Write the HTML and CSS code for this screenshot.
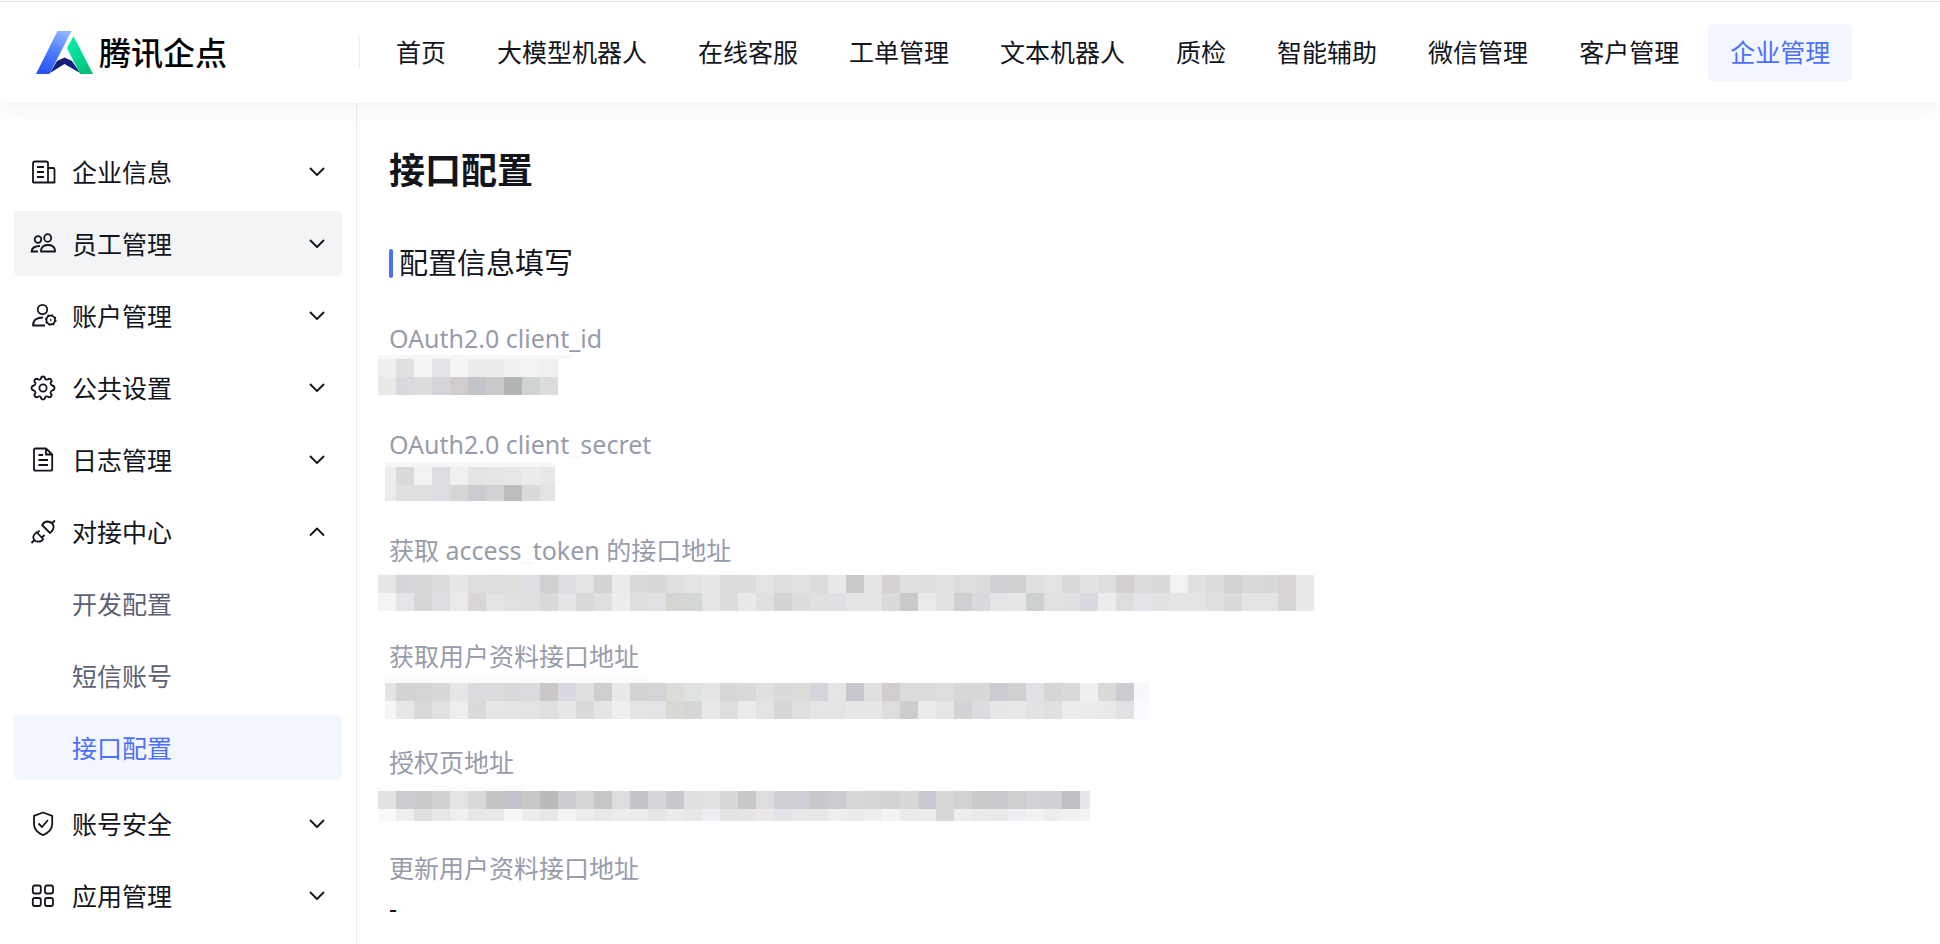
FILE: index.html
```
<!DOCTYPE html>
<html lang="zh-CN">
<head>
<meta charset="utf-8">
<title>接口配置 - 腾讯企点</title>
<link rel="stylesheet" href="styles.css">
</head>
<body>
<header class="topbar">
  <a class="brand" href="#">
    <svg class="brand-mark" viewBox="0 0 57 43" aria-hidden="true">
      <defs>
        <linearGradient id="blue" x1="0.7" y1="0" x2="0.3" y2="1"><stop offset="0" stop-color="#8fb4ff"/><stop offset="0.5" stop-color="#4a7cff"/><stop offset="1" stop-color="#2b52f5"/></linearGradient>
        <linearGradient id="green" x1="0.2" y1="0" x2="0.7" y2="1"><stop offset="0" stop-color="#06f3b4"/><stop offset="1" stop-color="#06bf76"/></linearGradient>
      </defs>
      <path d="M14 42 21 30 28.500 26.500 36 30 44 42 28.500 33z" fill="#122079"/>
      <path d="M21.500 0H35.500L13.500 43H0z" fill="url(#blue)"/>
      <path d="M37.500 5 57 43H44L31 17z" fill="url(#green)"/>
    </svg>
    <span class="brand-name">腾讯企点</span>
  </a>
  <nav class="mainnav">
    <a href="#">首页</a>
    <a href="#">大模型机器人</a>
    <a href="#">在线客服</a>
    <a href="#">工单管理</a>
    <a href="#">文本机器人</a>
    <a href="#">质检</a>
    <a href="#">智能辅助</a>
    <a href="#">微信管理</a>
    <a href="#">客户管理</a>
    <a href="#" class="active">企业管理</a>
  </nav>
</header>
<div class="layout">
  <aside class="sidebar">
    <button type="button" class="item">
      <svg class="icon" viewBox="0 0 28 28"><path d="M4 25V5.500Q4 3.500 6 3.500H17Q19 3.500 19 5.500V24.500M4 24.500H25.500V11.500Q25.500 10 24 10H19M8 9H15M8 14H15M8 19H15"/></svg>
      <span>企业信息</span><svg class="chev" viewBox="0 0 16 10"><path d="M1 1 8 8 15 1"/></svg>
    </button>
    <button type="button" class="item hover">
      <svg class="icon" viewBox="0 0 28 28"><circle cx="9" cy="9.500" r="3.300"/><ellipse cx="18.700" cy="8" rx="3.500" ry="3.800"/><path d="M12 21.500V20Q13 15 19 15T26 20V21.500zM11 16Q3 16 2.500 21.500H9"/></svg>
      <span>员工管理</span><svg class="chev" viewBox="0 0 16 10"><path d="M1 1 8 8 15 1"/></svg>
    </button>
    <button type="button" class="item">
      <svg class="icon" viewBox="0 0 28 28"><circle cx="13.500" cy="7.500" r="4.700"/><path d="M14 15.500Q4 15.500 4 23.500H16"/><circle cx="21.700" cy="18" r="4.300"/><circle cx="21.700" cy="18" r="5.200" stroke-dasharray="2 2.080" stroke-width="1.300"/><circle cx="21.700" cy="18" r=".6" stroke-width="1"/></svg>
      <span>账户管理</span><svg class="chev" viewBox="0 0 16 10"><path d="M1 1 8 8 15 1"/></svg>
    </button>
    <button type="button" class="item">
      <svg class="icon" viewBox="0 0 28 28"><path d="M11.800 5Q12.200 2.500 14 2.500T16.200 5Q17 6 18.500 5.500Q20.500 3.900 22 5.500T21.500 9Q21.500 11 23 11.500Q25.500 11.800 25.500 14T23 16.500Q21.500 17 21.500 19Q23.500 21 22 22.500T18.500 22.500Q17 22 16.200 23Q16 25.500 14 25.500T11.800 23Q11 22 9.500 22.500Q7.500 24 6 22.500T6.500 19Q6.500 17 5 16.500Q2.500 16 2.500 14T5 11.500Q6.500 11 6.500 9Q4.500 7 6 5.500T9.500 5.500Q11 6 11.800 5z"/><circle cx="14" cy="14" r="3.600"/></svg>
      <span>公共设置</span><svg class="chev" viewBox="0 0 16 10"><path d="M1 1 8 8 15 1"/></svg>
    </button>
    <button type="button" class="item">
      <svg class="icon" viewBox="0 0 28 28"><path d="M17 2.500H6.500Q5 2.500 5 4V23Q5 24.700 6.500 24.700H21.500Q23.200 24.700 23.200 23V8.500zM17 2.500V8.500H23M9.500 9H14M9.500 14H19M9.500 19H19"/></svg>
      <span>日志管理</span><svg class="chev" viewBox="0 0 16 10"><path d="M1 1 8 8 15 1"/></svg>
    </button>
    <button type="button" class="item" aria-expanded="true">
      <svg class="icon" viewBox="0 0 28 28"><path d="M2.500 25 5.500 22M22.500 5.500 26 2.500M7 13.500 14.500 21.500M7.800 14.500Q3.500 17 4.500 20.500Q6 24.500 10.500 23.500Q13.500 23 14 21M12.500 6.500 21.500 15.500M13.300 7Q15 3.500 18.500 3.500Q23.500 4 24.500 8Q25 12 21 15M8.500 15 10.500 12.500M13 19.500 15.500 17"/></svg>
      <span>对接中心</span><svg class="chev" viewBox="0 0 16 10"><path d="M1 8.500 8 1.500 15 8.500"/></svg>
    </button>
    <div class="submenu">
      <a class="item sub" href="#">开发配置</a>
      <a class="item sub" href="#">短信账号</a>
      <a class="item sub active" href="#">接口配置</a>
    </div>
    <button type="button" class="item">
      <svg class="icon" viewBox="0 0 28 28"><path d="M14 2.500 23.200 5.800V14Q23.200 21 14 25.200Q5 21 5 14V5.800zM9.500 13.500 13 17 19 10"/></svg>
      <span>账号安全</span><svg class="chev" viewBox="0 0 16 10"><path d="M1 1 8 8 15 1"/></svg>
    </button>
    <button type="button" class="item">
      <svg class="icon" viewBox="0 0 28 28"><rect x="3.800" y="3.500" width="8" height="8" rx="2"/><rect x="16" y="3.500" width="8" height="8" rx="2"/><rect x="3.800" y="16" width="8" height="8" rx="2"/><rect x="16" y="16" width="8" height="8" rx="2"/></svg>
      <span>应用管理</span><svg class="chev" viewBox="0 0 16 10"><path d="M1 1 8 8 15 1"/></svg>
    </button>
  </aside>
  <main class="content">
    <h1>接口配置</h1>
    <h2>配置信息填写</h2>
    <div class="fields">
      <dl>
        <div><dt>OAuth2.0 client_id</dt><dd></dd></div>
        <div><dt>OAuth2.0 client<span class="faded">_</span>secret</dt><dd></dd></div>
        <div><dt>获取 access<span class="faded">_</span>token 的接口地址</dt><dd></dd></div>
        <div><dt>获取用户资料接口地址</dt><dd></dd></div>
        <div><dt>授权页地址</dt><dd></dd></div>
        <div><dt>更新用户资料接口地址</dt><dd>-</dd></div>
      </dl>
      <svg class="mask" viewBox="0 0 936 466" aria-hidden="true"></svg>
    </div>
  </main>
</div>
<script src="mask.js"></script>
</body>
</html>
```
FILE: styles.css
```
* { box-sizing: border-box; }
body {
  margin: 0;
  min-height: 100vh;
  display: flex;
  flex-direction: column;
  background: #fff;
  color: #13151c;
  font-family: "Noto Sans", "Noto Sans CJK SC", sans-serif;
  font-size: 25px;
  font-weight: 400;
  line-height: 36px;
}
a { color: inherit; text-decoration: none; }

.topbar {
  position: relative;
  display: flex;
  align-items: center;
  height: 102px;
  margin-top: 1px;
  border-top: 1px solid #e4e5e6;
  background: #fff;
  box-shadow: 0 4px 22px rgba(0, 0, 0, 0.06);
}
.brand {
  display: flex;
  align-items: center;
  gap: 6px;
  width: 360px;
  padding-left: 36px;
  border-right: 1px solid #e9eaec;
  height: 30px;
}
.brand-mark { width: 57px; height: 43px; }
.brand-name {
  padding-bottom: 4px;
  font-family: "Noto Sans CJK SC", sans-serif;
  font-size: 32px;
  font-weight: 500;
  color: #000;
}
.mainnav { display: flex; gap: 7px; padding-left: 14px; }
.mainnav a {
  padding: 10px 22px 11px;
  border-radius: 5px;
  white-space: nowrap;
}
.mainnav .active { background: #f2f6ff; color: #4b6fff; }

.layout { display: flex; flex: 1; }
.sidebar {
  display: flex;
  flex-direction: column;
  gap: 7px;
  width: 357px;
  padding: 36px 14px 0;
  border-right: 1px solid #ebecf1;
}
.item {
  display: flex;
  align-items: center;
  gap: 15px;
  height: 65px;
  padding: 0 17px 0 15px;
  border: 0;
  border-radius: 5px;
  background: none;
  color: inherit;
  font: inherit;
  text-align: left;
}
.item span { flex: 1; }
.item.hover { background: #f3f4f6; }
.submenu { display: flex; flex-direction: column; gap: 7px; margin-bottom: 4px; }
.sub { padding-left: 58px; color: #5c6273; }
.sub.active { background: #f2f6ff; color: #4b6fff; }
.icon, .chev {
  fill: none;
  stroke: #13151c;
  stroke-width: 1.8;
  stroke-linejoin: round;
}
.icon { width: 28px; height: 28px; }
.chev { width: 16px; height: 10px; }

.content { flex: 1; padding: 42px 32px 0; }
h1 {
  margin: 0;
  font-size: 36px;
  line-height: 52px;
  font-weight: 700;
}
h2 {
  display: flex;
  align-items: center;
  gap: 6px;
  margin: 45px 0 0;
  font-size: 29px;
  line-height: 42px;
  font-weight: 400;
}
h2::before {
  content: "";
  width: 4px;
  height: 29px;
  border-radius: 2px;
  background: #4b6fff;
}
.fields { position: relative; margin-top: 36px; }
dl { display: flex; flex-direction: column; gap: 30px; margin: 0; }
dt { color: #979cab; }
dd { margin: 0; padding-top: 4px; height: 40px; }
.faded { color: #f7f7f8; }
.mask {
  position: absolute;
  top: 35px;
  left: -11px;
  width: 936px;
  height: 466px;
  shape-rendering: crispEdges;
}
```
FILE: mask.js
```
// Pixelated cover for the private values: 18px cells, one hex colour per cell.
const CELL = 18;
const bars = [
  { y: 4, x0: 0, x1: 180, rows: [
    [18, "eeeff1 e0e0e3 f5f5f3 e3e4e8 f5f5f5 ebebeb ebebeb f1f1f1 f2f4f3 f0f0f0"],
    [18, "e9e9e6 dad9dd dcdcdc d4d5da d2cccd c3c4ca cacaca b3b4b5 ced3d3 dcdcdd"]] },
  { y: 112, x0: 7, x1: 177, rows: [
    [18, "eceeed d9d9dc f2f2f2 dcdde2 f0f0f0 e4e4e4 e5e5e5 e8e8e8 e9ebec e8e8e8"],
    [16, "ebebe9 dfdfe1 dfdfdf dbdde3 d8d6d4 cbccd1 d2d2d4 bcbdbe d9dbda e3e3e1"]] },
  { y: 220, x0: 0, x1: 936, rows: [
    [18, "e5e7e6 d5d6d9 d7d7d9 dcdcde e7e7e7 e0dddf dddddd dededd dee0e5 d1cfd0 dcdee2 e3e3e5 d3d3d4 eaebed dadada d7d8da e0e0e0 e2e4e5 e9e7e5 dbdbde dcdcdd e3e3e3 dcdee0 e1e1e1 dadbdd e9e9e9 cacacb e3e3e3 d6d0d4 dfdfe1 dedede e2e2e2 dddddd dcdcdc cfd1d6 d1d2d0 dee0e1 e3e3e1 d9d9dc e1e1e1 dddee0 d4d0d2 d9dbdc d9d9dc f2f2f0 e0e0e0 dadcdd d0d3d1 d7d9da d6d8d9 d9d4d3 e8e9eb"],
    [18, "f3f5f4 e4e5e8 d6d6d8 dcdde0 eaeaea dad6d7 e3e3e3 dfe1e2 dfdfe1 d9d9d8 e4e4e7 d7d9da dfdfdf ecedef dedede e0e1e3 d4d4d1 d2d6d6 e5e5e5 dcdcdf e9e9e9 e0e0e0 d3d3d2 dadcdd e0e0df dfe0e3 e4e4e7 e4e4e4 dbd9da cacacc e9eaec e2e2e2 d2cfd3 d8dadd e4e5e7 e4e7e6 ccd0ce e1e1e1 e0e0e0 dad9df ececec dfdcde e2e4e9 e2e2e5 e4e4e4 e4e4e4 dedfe1 dadada e3e4e6 e2e4e5 d8d5d6 e6e8e9"]] },
  { y: 328, x0: 7, x1: 771, rows: [
    [18, "e4e6e5 d2d3d5 d3d4d6 d8d8db e6e6e6 dcdade dcdcde d9d9dc dadbdf cbc7c9 d8d9e1 dfe0e2 cececf e8e9eb d3d3d3 d4d4d6 dcdcd9 dee2e2 e5e4e2 d8d8db d9d9db e0e0e0 d8dadc dcdcda d5d6dc e3e6e2 c9c7ce dfe1e0 d2ccd1 dbdbde d9dbdc dddddd d8d8d8 d7d9d8 cbccd2 d0d0d0 e1e2e8 d6d6d6 d8d9db edf0ee dcdad6 cbcdd1 f7f8fb"],
    [18, "f3f6f5 e7e7e7 d9d9db e0e1e3 ecefed dcd9da e6e6e6 e4e4e6 e3e3e4 dfdfdf e7e7ea d9dadc e4e4e4 eeeff1 e4e4e4 e1e3e4 d8d8d5 d5d7d6 e8e8e8 dedee1 ebebeb e3e3e3 d6d6d6 dfdfdf e5e5e5 e2e5e3 e7e7e7 e7e7e7 dfdcde cccdcf e9ebec e5e5e5 d5d2d6 dbdcdf e7e7e7 e6e9e7 e2e2e2 e0e0e0 ededed e9ebec ebe9e7 e0e2e4 fafbfe"]] },
  { y: 436, x0: 0, x1: 712, rows: [
    [18, "e1e3e2 cbccd0 cbcbcd d0d0d2 e4e4e4 d9d9d9 c4c5c5 c1c3c8 c7c9c9 b9bbba cdccd2 d4d4d4 c6c6c8 dbddde c7c4c9 d5d4d8 cac7cd dfdfe2 dfe2e0 d7d7d9 c8c8ca dddddd d0ced2 cecfd6 c9c9cb cbccd1 d7d7d6 d2d4d5 d1d3d4 d8d8d8 c9cbd1 d7d7d7 d0d3d1 cacacb cac9cf cfcfcf d1d2d7 cfd1d3 c1bec5 e5e6e8"],
    [12, "f8faf9 edefee dfdfe2 e7e7ea eef0ef e7e7e7 e8e8e8 f6f6f6 ececec e7e7e7 f4f4f4 eceeed e8e8e8 eaedec ececec e6e6e7 ebebec e7e7e7 edeef1 e4e4e4 e5e5e5 ebe7e6 e3e4e9 e8e8e8 e7e8ea ecefed ebebeb edeef0 f3f3f3 e9ebed eeebec d5d7d8 ededed eaeaea e9e9e9 eeeff2 f1f3f2 ededed f0f1f3 f4f4f4"]] }
];
const svg = document.querySelector(".mask");
function cell(x, y, w, h, fill) {
  const r = document.createElementNS("http://www.w3.org/2000/svg", "rect");
  for (const [k, v] of Object.entries({ x, y, width: w, height: h, fill })) r.setAttribute(k, v);
  svg.append(r);
}
// Pale top edges
cell(0, 0, 193, 4, "#f7f7f8");
cell(7, 108, 170, 4, "#f5f6f7");
cell(0, 219, 360, 1, "#f8f8f8");
cell(7, 322, 263, 6, "#fafbfb");
cell(0, 431, 144, 5, "#fcfcfc");
for (const bar of bars) {
  let y = bar.y;
  for (const [h, colours] of bar.rows) {
    colours.split(" ").forEach((c, i) => {
      const left = Math.max(i * CELL, bar.x0);
      const right = Math.min((i + 1) * CELL, bar.x1);
      if (right > left) cell(left, y, right - left, h, "#" + c);
    });
    y += h;
  }
}
```
